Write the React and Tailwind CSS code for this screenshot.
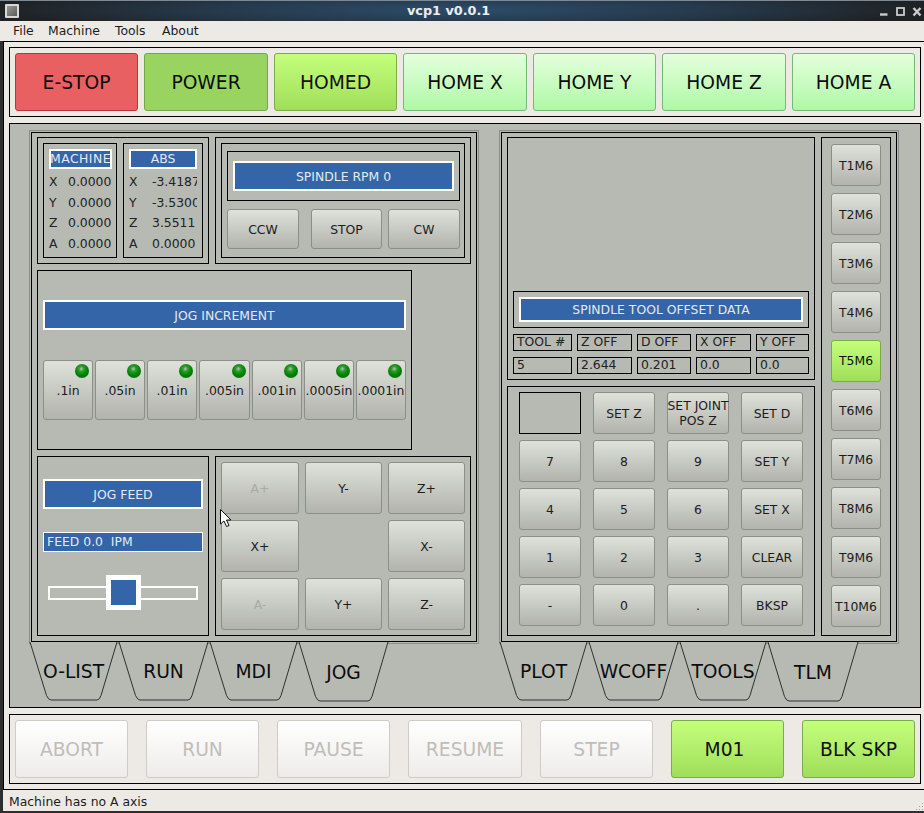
import React from 'react';

const small = 'bg-gradient-to-b from-[#dfe1db] to-[#b1b3ac] border-[#8c8e88] text-[#1c1c1c]';
const green = 'bg-gradient-to-b from-[#c4ff7c] to-[#a0de5a] border-[#78ad48] text-[#111]';

function Btn({ className = '', children, dim }) {
  return (
    <div className={`flex items-center justify-center text-center leading-[15px] whitespace-nowrap shrink-0 rounded-[3px] border text-[12.4px] ${small} ${className}`}>
      <span className={dim ? 'text-[#a9aba5]' : ''}>{children}</span>
    </div>
  );
}

function BigBtn({ className = '', children }) {
  return (
    <div className={`flex items-center justify-center h-[58px] pt-[2px] shrink-0 rounded-[3px] border text-[18.7px] ${className}`}>
      {children}
    </div>
  );
}

function Label({ className = '', children }) {
  return (
    <div className={`flex items-center justify-center shrink-0 overflow-hidden whitespace-nowrap border-2 border-white bg-[#3465a8] text-[12.4px] text-[#e4e9f1] ${className}`}>
      {children}
    </div>
  );
}

function Led() {
  return (
    <span className="absolute top-[4px] right-[4px] w-[14px] h-[14px] rounded-full bg-[radial-gradient(circle_at_45%_35%,#a8cfa8_0%,#2f9a2f_22%,#008000_55%,#007000_100%)]" />
  );
}

function Axis({ name, value, labelW }) {
  return (
    <div className="flex items-center h-[20.67px] text-[12.4px] text-[#222] whitespace-nowrap overflow-hidden">
      <span className={`shrink-0 ${labelW}`}>{name}</span>
      <span>{value}</span>
    </div>
  );
}

function Tab({ w, text, active }) {
  const b = active ? 59 : 58;
  return (
    <div className="relative shrink-0" style={{ width: w, height: 60 }}>
      <svg width={w} height="60" className="block">
        <path
          d={`M1 0 L17.5 ${b - 4.5} Q19.5 ${b} 22 ${b} H${w - 21} Q${w - 18.5} ${b} ${w - 17} ${b - 4.5} L${w - 1} 0`}
          fill="#b7bab3"
          stroke="#2f312d"
          strokeWidth="1"
        />
      </svg>
      <span className={`absolute left-0 right-0 text-center text-[18.7px] leading-[22px] text-[#0c0c0c] whitespace-nowrap ${active ? 'top-[20px]' : 'top-[19px]'}`}>{text}</span>
    </div>
  );
}

function Pane({ width, tabs, children }) {
  return (
    <div className={`flex flex-col shrink-0 ${width}`}>
      <div className="h-[514px] border border-[#8c8e89] p-px">
        <div className="h-full border border-black pt-[4px] px-[5px] pb-[5px]">{children}</div>
      </div>
      <div className="flex -mt-[2px] relative">
        {tabs.map((t) => (
          <Tab key={t.text} {...t} />
        ))}
      </div>
    </div>
  );
}

const incs = [
  ['.1in', 'w-[50px]'],
  ['.05in', 'w-[50px]'],
  ['.01in', 'w-[50px]'],
  ['.005in', 'w-[51px]'],
  ['.001in', 'w-[50px]'],
  ['.0005in', 'w-[50px]'],
  ['.0001in', 'w-[50px]'],
];

const offsets = [
  ['TOOL #', '5', 'w-[59px]'],
  ['Z OFF', '2.644', 'w-[55px]'],
  ['D OFF', '0.201', 'w-[54px]'],
  ['X OFF', '0.0', 'w-[55px]'],
  ['Y OFF', '0.0', 'w-[53px]'],
];

const keys = ['SET Z', <>SET JOINT<br />POS Z</>, 'SET D', '7', '8', '9', 'SET Y', '4', '5', '6', 'SET X', '1', '2', '3', 'CLEAR', '-', '0', '.', 'BKSP'];

const tools = ['T1M6', 'T2M6', 'T3M6', 'T4M6', 'T5M6', 'T6M6', 'T7M6', 'T8M6', 'T9M6', 'T10M6'];

const homeBtn = 'bg-gradient-to-b from-[#e4ffdc] to-[#aef8a6] border-[#74ba74] text-[#0b0b0b]';

export default function App() {
  return (
    <div className="w-[924px] h-[813px] relative overflow-hidden bg-[#edeae6] font-['DejaVu_Sans',sans-serif]">
      {/* window title bar */}
      <div className="relative h-[21px] flex items-center border-t border-t-[#7d8a96] bg-[radial-gradient(ellipse_50%_110%_at_50%_45%,#2c4d6b_0%,#26394b_55%,#1f2225_100%)]">
        <div className="ml-[5px] w-[14px] h-[14px] border-2 border-[#d8d8d6] bg-gradient-to-br from-[#9a9a98] to-[#5c5c5a] rounded-[1px]" />
        <span className="ml-[388px] text-[12.8px] font-bold text-[#ecedee] whitespace-nowrap">vcp1 v0.0.1</span>
        <svg width="44" height="14" viewBox="0 0 44 14" className="absolute right-0 top-[3px]" fill="none" stroke="#c9cbcc">
          <path d="M-1 10.5 H7.5" strokeWidth="2.4" />
          <rect x="17" y="4" width="7" height="7" strokeWidth="1.8" />
          <path d="M33.5 4 L40.5 11.5 M40.5 4 L33.5 11.5" strokeWidth="2.4" />
        </svg>
      </div>

      {/* menu */}
      <div className="h-[20px] flex items-center pl-[13px] text-[12.4px] text-[#1c1c1c]">
        <span className="w-[35px]">File</span>
        <span className="w-[67px]">Machine</span>
        <span className="w-[47px]">Tools</span>
        <span>About</span>
      </div>

      {/* central area with its dark window edge on the left */}
      <div className="flex h-[749px]">
        <div className="w-[3px] bg-[#2c2e30] shrink-0" />
        <div className="flex-1 border-t border-b border-l border-black pl-[5px] pt-[5px] flex flex-col gap-[6px]">
          {/* machine state buttons */}
          <div className="w-[912px] h-[70px] border border-black px-[5px] pt-[5px] flex gap-[6px]">
            <BigBtn className="w-[123px] bg-[#e96062] border-[#b8353a] text-[#0b0b0b]">E-STOP</BigBtn>
            <BigBtn className="w-[124px] bg-[#98d45f] border-[#72a848] text-[#0b0b0b]">POWER</BigBtn>
            <BigBtn className={`w-[123px] ${green}`}>HOMED</BigBtn>
            <BigBtn className={`w-[124px] ${homeBtn}`}>HOME X</BigBtn>
            <BigBtn className={`w-[123px] ${homeBtn}`}>HOME Y</BigBtn>
            <BigBtn className={`w-[124px] ${homeBtn}`}>HOME Z</BigBtn>
            <BigBtn className={`w-[123px] ${homeBtn}`}>HOME A</BigBtn>
          </div>

          {/* main tab panes */}
          <div className="w-[912px] h-[585px] border border-black bg-[#b7bab3] pl-[19px] pt-[6px] flex gap-[20px]">
            <Pane
              width="w-[450px]"
              tabs={[
                { w: 89, text: 'O-LIST' },
                { w: 91, text: 'RUN' },
                { w: 89, text: 'MDI' },
                { w: 91, text: 'JOG', active: true },
              ]}
            >
              <div className="flex flex-col gap-[6px]">
                <div className="flex gap-[6px]">
                  {/* DRO */}
                  <div className="w-[172px] h-[127px] border border-black p-[5px] flex gap-[6px]">
                    <div className="w-[74px] h-[115px] border border-black p-[5px]">
                      <Label className="w-[63px] h-[20px] mb-[3px] tracking-[0.45px]">MACHINE</Label>
                      <Axis name="X" value="0.0000" labelW="w-[19px]" />
                      <Axis name="Y" value="0.0000" labelW="w-[19px]" />
                      <Axis name="Z" value="0.0000" labelW="w-[19px]" />
                      <Axis name="A" value="0.0000" labelW="w-[19px]" />
                    </div>
                    <div className="w-[80px] h-[115px] border border-black p-[5px]">
                      <Label className="w-[68px] h-[20px] mb-[3px]">ABS</Label>
                      <Axis name="X" value="-3.4187" labelW="w-[23px]" />
                      <Axis name="Y" value="-3.5300" labelW="w-[23px]" />
                      <Axis name="Z" value="3.5511" labelW="w-[23px]" />
                      <Axis name="A" value="0.0000" labelW="w-[23px]" />
                    </div>
                  </div>
                  {/* spindle */}
                  <div className="w-[256px] h-[127px] border border-black p-[5px]">
                    <div className="h-[115px] border border-black px-[5px] pt-[7px]">
                      <div className="w-[233px] h-[50px] border border-black flex items-center pl-[5px]">
                        <Label className="w-[221px] h-[30px] pt-[2px]">SPINDLE RPM 0</Label>
                      </div>
                      <div className="flex mt-[8px]">
                        <Btn className="w-[72px] h-[40px]">CCW</Btn>
                        <Btn className="w-[71px] h-[40px] ml-[12px]">STOP</Btn>
                        <Btn className="w-[72px] h-[40px] ml-[6px]">CW</Btn>
                      </div>
                    </div>
                  </div>
                </div>

                {/* jog increment */}
                <div className="w-[375px] h-[180px] border border-black px-[5px] pt-[29px]">
                  <Label className="w-[363px] h-[30px] pt-[2px]">JOG INCREMENT</Label>
                  <div className="flex gap-[2px] mt-[30px]">
                    {incs.map(([t, w]) => (
                      <div key={t} className={`relative ${w}`}>
                        <Btn className="w-full h-[60px] pt-px">{t}</Btn>
                        <Led />
                      </div>
                    ))}
                  </div>
                </div>

                <div className="flex gap-[6px]">
                  {/* jog feed */}
                  <div className="w-[172px] h-[180px] border border-black px-[5px] pt-[22px]">
                    <Label className="w-[160px] h-[30px] pt-[2px]">JOG FEED</Label>
                    <div className="w-[160px] h-[20px] mt-[23px] pt-px border border-white bg-[#3465a8] flex items-center pl-[3px] text-[12.4px] text-[#e4e9f1] whitespace-pre">FEED 0.0  IPM</div>
                    <div className="relative w-[150px] h-[35px] ml-[5px] mt-[23px] flex items-center">
                      <div className="w-full h-[14px] border-2 border-white" />
                      <div className="absolute left-[58px] top-0 w-[35px] h-[35px] border-[5px] border-white bg-[#3465a8]" />
                    </div>
                  </div>
                  {/* jog buttons */}
                  <div className="w-[256px] h-[180px] border border-black p-[5px] grid grid-cols-[78px_77px_77px] grid-rows-[52px_52px_52px] gap-[6px]">
                    <Btn className="w-full h-full" dim>A+</Btn>
                    <Btn className="w-full h-full">Y-</Btn>
                    <Btn className="w-full h-full">Z+</Btn>
                    <Btn className="w-full h-full">X+</Btn>
                    <div />
                    <Btn className="w-full h-full">X-</Btn>
                    <Btn className="w-full h-full" dim>A-</Btn>
                    <Btn className="w-full h-full">Y+</Btn>
                    <Btn className="w-full h-full">Z-</Btn>
                  </div>
                </div>
              </div>
            </Pane>

            <Pane
              width="w-[400px]"
              tabs={[
                { w: 89, text: 'PLOT' },
                { w: 91, text: 'WCOFF' },
                { w: 88, text: 'TOOLS' },
                { w: 92, text: 'TLM', active: true },
              ]}
            >
              <div className="flex gap-[6px]">
                <div className="flex flex-col gap-[6px]">
                  {/* tool offsets */}
                  <div className="w-[308px] h-[243px] border border-black px-[5px] pb-[5px] flex flex-col justify-end">
                    <div className="w-[296px] h-[37px] border border-black flex items-center pl-[5px]">
                      <Label className="w-[284px] h-[25px] pt-px">SPINDLE TOOL OFFSET DATA</Label>
                    </div>
                    <div className="flex gap-[5px] mt-[6px]">
                      {offsets.map(([h, , w]) => (
                        <div key={h} className={`${w} h-[17px] border border-black pl-[3px] flex items-center text-[12.4px] text-[#222] whitespace-nowrap`}>{h}</div>
                      ))}
                    </div>
                    <div className="flex gap-[5px] mt-[6px]">
                      {offsets.map(([h, v, w]) => (
                        <div key={h} className={`${w} h-[17px] border border-black pl-[3px] flex items-center text-[12.4px] text-[#222]`}>{v}</div>
                      ))}
                    </div>
                  </div>
                  {/* keypad */}
                  <div className="w-[308px] h-[250px] border border-black px-[11px] pt-[5px] grid grid-cols-[62px_62px_62px_62px] auto-rows-[42px] gap-x-[12px] gap-y-[6px]">
                    <div className="border border-black" />
                    {keys.map((k, i) => (
                      <Btn key={i} className="w-full h-full">{k}</Btn>
                    ))}
                  </div>
                </div>

                {/* tool change buttons */}
                <div className="w-[70px] h-[499px] border border-black pt-[6px] flex flex-col items-center gap-[7px]">
                  {tools.map((t) =>
                    t === 'T5M6' ? (
                      <div key={t} className={`w-[50px] h-[42px] shrink-0 flex items-center justify-center rounded-[3px] border text-[12.4px] ${green}`}>{t}</div>
                    ) : (
                      <Btn key={t} className="w-[50px] h-[42px]">{t}</Btn>
                    )
                  )}
                </div>
              </div>
            </Pane>
          </div>

          {/* program control buttons */}
          <div className="w-[912px] h-[70px] border border-black px-[5px] pt-[5px] flex gap-[18px]">
            {['ABORT', 'RUN', 'PAUSE', 'RESUME', 'STEP'].map((t) => (
              <BigBtn key={t} className={`${t === 'RESUME' ? 'w-[114px]' : 'w-[113px]'} bg-gradient-to-b from-[#ffffff] to-[#eeecea] border-[#cfccc8] text-[#bfbdba]`}>{t}</BigBtn>
            ))}
            <BigBtn className={`w-[113px] pr-[6px] ${green}`}>M01</BigBtn>
            <BigBtn className={`w-[113px] ${green}`}>BLK SKP</BigBtn>
          </div>
        </div>
      </div>

      {/* status bar */}
      <div className="flex h-[21px]">
        <div className="w-[3px] bg-[#2c2e30] shrink-0" />
        <div className="flex-1 flex items-center pl-[6px] pt-[3px] text-[12.4px] text-[#1c1c1c]">Machine has no A axis</div>
        <svg width="9" height="9" viewBox="0 0 9 9" className="self-end" fill="#a8a5a0">
          <rect x="7" y="1" width="1" height="1" />
          <rect x="4" y="4" width="1" height="1" />
          <rect x="7" y="4" width="1" height="1" />
          <rect x="1" y="7" width="1" height="1" />
          <rect x="4" y="7" width="1" height="1" />
          <rect x="7" y="7" width="1" height="1" />
        </svg>
      </div>
      <div className="h-[2px] bg-[#2c2e30]" />

      {/* mouse pointer */}
      <svg width="14" height="20" viewBox="0 0 14 20" className="absolute left-[220px] top-[509px]">
        <path d="M0.5 0.5 V15 L4 12 L6.5 17.5 L9 16.5 L6.5 11 H11 Z" fill="#fff" stroke="#111" strokeWidth="1" />
      </svg>
    </div>
  );
}
